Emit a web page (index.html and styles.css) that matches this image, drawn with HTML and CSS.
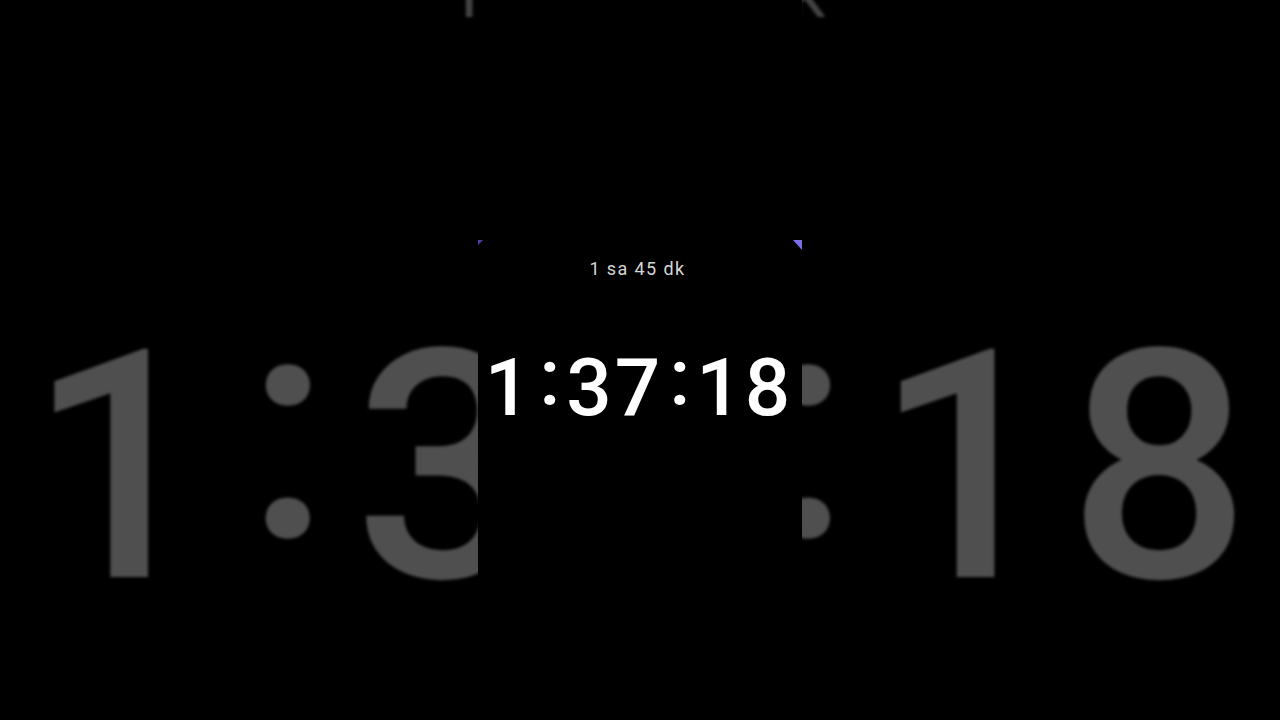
FILE: index.html
```html
<!DOCTYPE html>
<html lang="tr">
<head>
<meta charset="utf-8">
<title>Timer</title>
<link rel="stylesheet" href="styles.css">
</head>
<body>
<div class="stage">
  <div class="layer backdrop" aria-hidden="true">
    <div class="video">
      <div class="corners"><span class="corner-l"></span><span class="corner-r"></span></div>
      <div class="subtitle">1 sa 45 dk</div>
      <div class="time"><span class="d">1</span><span class="colon">:</span><span class="d">3</span><span class="d">7</span><span class="colon">:</span><span class="d">1</span><span class="d">8</span></div>
    </div>
  </div>
  <div class="layer front">
    <div class="video">
      <div class="corners"><span class="corner-l"></span><span class="corner-r"></span></div>
      <div class="subtitle">1 sa 45 dk</div>
      <div class="time"><span class="d">1</span><span class="colon">:</span><span class="d">3</span><span class="d">7</span><span class="colon">:</span><span class="d">1</span><span class="d">8</span></div>
    </div>
  </div>
</div>
</body>
</html>
```
FILE: styles.css
```css
html, body {
  margin: 0;
  padding: 0;
  background: #000;
  overflow: hidden;
}
.stage {
  width: 1280px;
  height: 720px;
  display: grid;
  overflow: hidden;
  background: #000;
}
.layer {
  grid-area: 1 / 1;
  width: 1280px;
  height: 720px;
  display: flex;
  justify-content: center;
}
.backdrop {
  transform: scale(4);
  transform-origin: 637px 361px;
  filter: brightness(0.31) blur(0.4px);
  z-index: 0;
}
.front {
  position: relative;
  z-index: 1;
}
.video {
  width: 324px;
  height: 720px;
  background: #000;
  box-sizing: border-box;
  padding-top: 240px;
  display: flex;
  flex-direction: column;
  align-items: center;
  font-family: Roboto, "Noto Sans", sans-serif;
}
.corners {
  align-self: stretch;
  height: 10px;
  display: flex;
  justify-content: space-between;
  align-items: flex-start;
}
.corner-l {
  width: 5px;
  height: 5px;
  background: #4a40a8;
  clip-path: polygon(0 0, 100% 0, 0 100%);
}
.corner-r {
  width: 9px;
  height: 10px;
  background: #7b70e8;
  clip-path: polygon(0 0, 100% 0, 100% 100%);
}
.subtitle {
  margin-top: 7px;
  font-size: 18px;
  line-height: 24px;
  color: #d6d6d6;
  letter-spacing: 1.4px;
  padding-right: 5px;
}
.time {
  margin-top: 67px;
  font-size: 80px;
  line-height: 80px;
  font-weight: 500;
  color: #fff;
  display: flex;
  align-items: baseline;
  padding-right: 5px;
}
.time .d:not(:last-child) {
  margin-right: 3px;
}
.colon {
  margin: 0 6px;
  transform: translateY(-10px);
}
```
